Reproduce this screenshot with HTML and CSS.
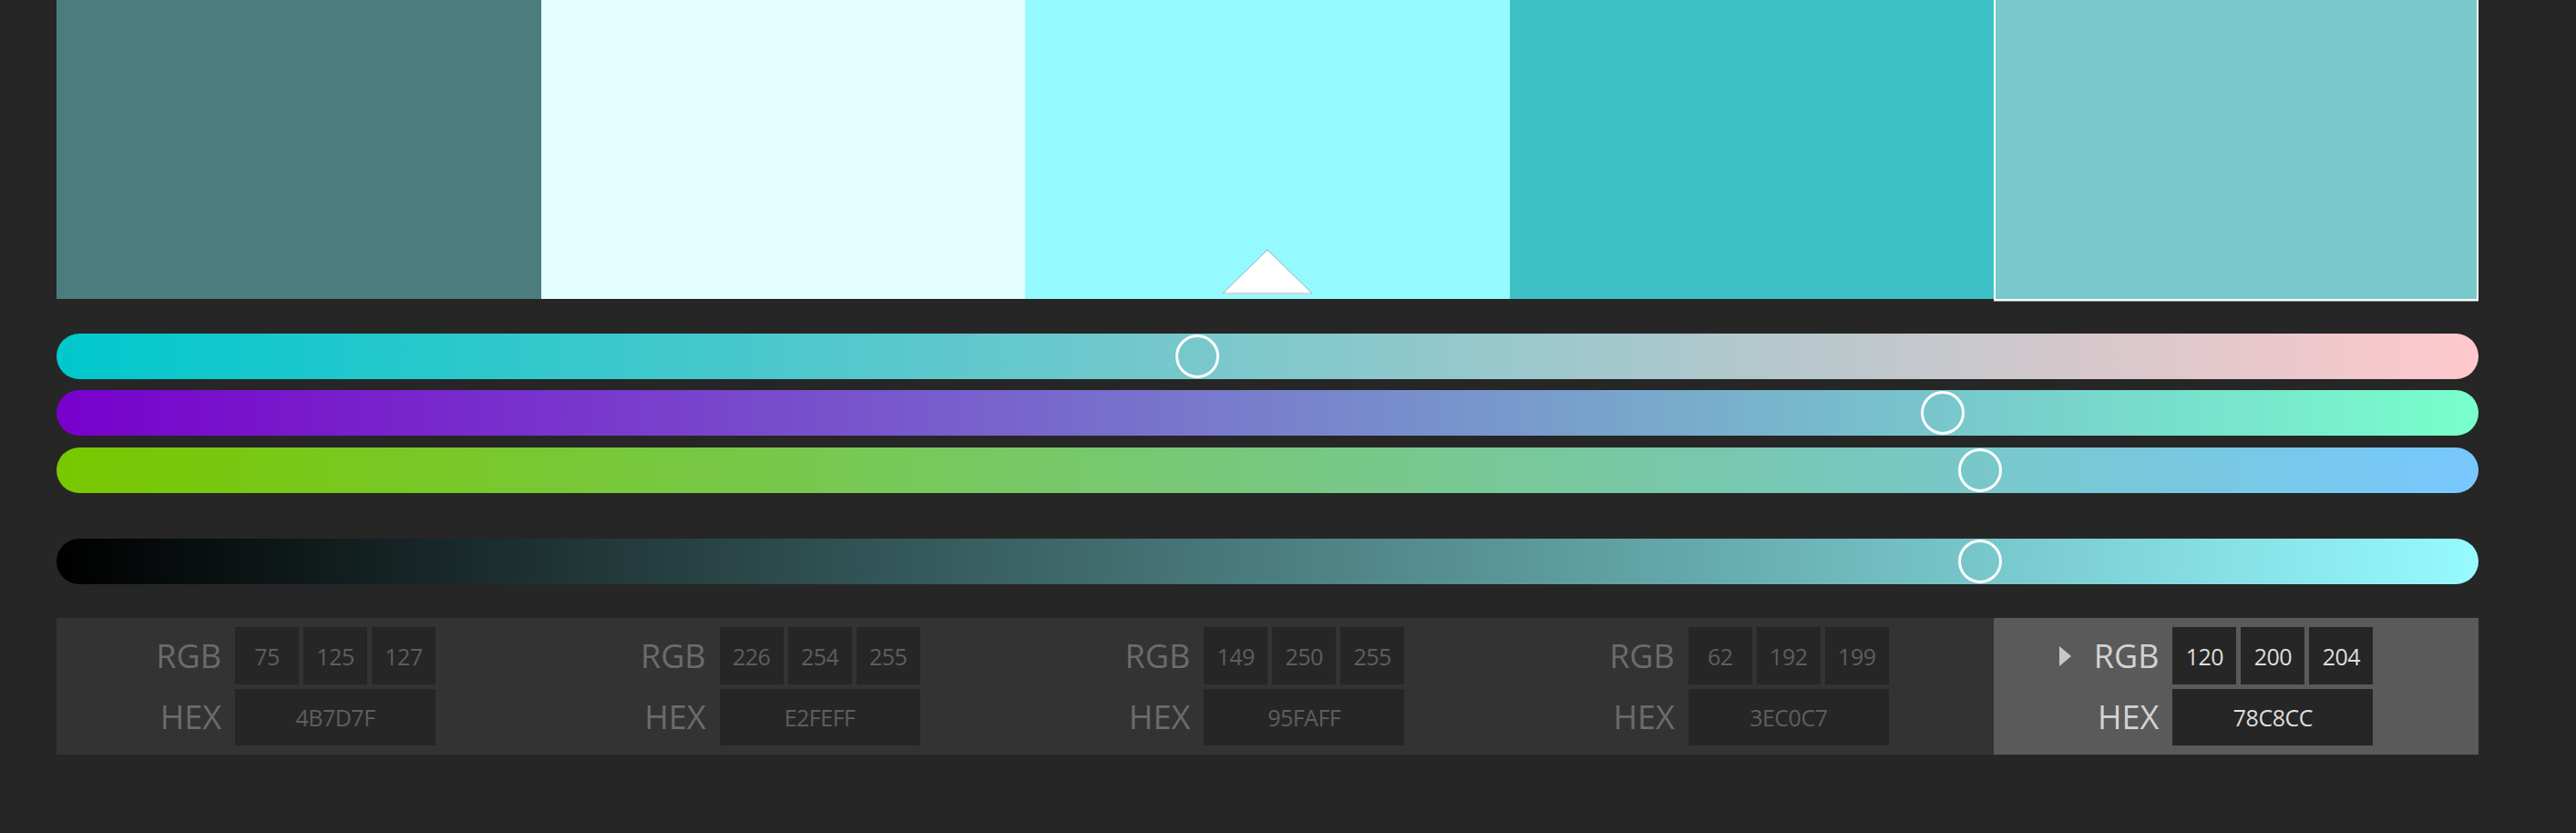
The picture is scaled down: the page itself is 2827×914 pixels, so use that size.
FILE: index.html
```html
<!DOCTYPE html>
<html>
<head>
<meta charset="utf-8">
<title>Color Wheel</title>
<link rel="stylesheet" href="styles.css">
</head>
<body>
<div class="app">
  <div class="swatches">
    <div class="swatch s1"></div>
    <div class="swatch s2"></div>
    <div class="swatch s3">
      <svg class="base-marker" viewBox="0 0 100 50" width="100" height="50">
        <polygon points="1,49 50,1 99,49" fill="#ffffff" stroke="#8fb4b6" stroke-width="1"/>
        <line x1="1" y1="49.5" x2="99" y2="49.5" stroke="#d8d8d8" stroke-width="1"/>
      </svg>
    </div>
    <div class="swatch s4"></div>
    <div class="swatch s5 selected"></div>
  </div>

  <div class="sliders">
    <div class="slider sl-r"><span class="thumb" style="left: calc(1px + (100% - 50px) * 0.4706)"></span></div>
    <div class="slider sl-g"><span class="thumb" style="left: calc(1px + (100% - 50px) * 0.7843)"></span></div>
    <div class="slider sl-b"><span class="thumb" style="left: calc(1px + (100% - 50px) * 0.8)"></span></div>
    <div class="slider sl-v"><span class="thumb" style="left: calc(1px + (100% - 50px) * 0.8)"></span></div>
  </div>

  <div class="values">
    <div class="col">
      <div class="row"><div class="label">RGB</div><div class="boxes"><div class="box">75</div><div class="box">125</div><div class="box">127</div></div></div>
      <div class="row"><div class="label">HEX</div><div class="boxes"><div class="box wide">4B7D7F</div></div></div>
    </div>
    <div class="col">
      <div class="row"><div class="label">RGB</div><div class="boxes"><div class="box">226</div><div class="box">254</div><div class="box">255</div></div></div>
      <div class="row"><div class="label">HEX</div><div class="boxes"><div class="box wide">E2FEFF</div></div></div>
    </div>
    <div class="col">
      <div class="row"><div class="label">RGB</div><div class="boxes"><div class="box">149</div><div class="box">250</div><div class="box">255</div></div></div>
      <div class="row"><div class="label">HEX</div><div class="boxes"><div class="box wide">95FAFF</div></div></div>
    </div>
    <div class="col">
      <div class="row"><div class="label">RGB</div><div class="boxes"><div class="box">62</div><div class="box">192</div><div class="box">199</div></div></div>
      <div class="row"><div class="label">HEX</div><div class="boxes"><div class="box wide">3EC0C7</div></div></div>
    </div>
    <div class="col active">
      <div class="row"><div class="label"><span class="caret"></span>RGB</div><div class="boxes"><div class="box">120</div><div class="box">200</div><div class="box">204</div></div></div>
      <div class="row"><div class="label">HEX</div><div class="boxes"><div class="box wide">78C8CC</div></div></div>
    </div>
  </div>
</div>
</body>
</html>
```

FILE: styles.css
```css
* { box-sizing: border-box; }

html, body {
  margin: 0;
  padding: 0;
  background: #262626;
  overflow: hidden;
}

body {
  width: 2827px;
  height: 914px;
  font-family: "Open Sans", "Noto Sans", "Liberation Sans", sans-serif;
}

.app {
  width: 2658px;
  margin-left: 62px;
}

/* swatches */
.swatches {
  display: grid;
  grid-template-columns: repeat(5, 1fr);
  align-items: start;
  height: 328px;
}

.swatch {
  height: 328px;
  position: relative;
}

.s1 { background: #4b7d7f; }
.s2 { background: #e2feff; }
.s3 { background: #95faff; }
.s4 { background: #3ec0c7; }
.s5 { background: #78c8cc; }

.swatch.selected {
  margin-top: -2px;
  height: 332px;
  border: 2px solid #ffffff;
  box-shadow: 0 1px 0 #8a8a8a;
}

.base-marker {
  position: absolute;
  left: 50%;
  bottom: 5px;
  transform: translateX(-50%);
  display: block;
}

/* sliders */
.sliders {
  margin-top: 38px;
  display: flex;
  flex-direction: column;
}

.slider {
  position: relative;
  height: 50px;
  border-radius: 25px;
}

.sl-r { background: linear-gradient(to right, #00c8cc, #ffc8cc); }
.sl-g { margin-top: 12px; background: linear-gradient(to right, #7800cc, #78ffcc); }
.sl-b { margin-top: 13px; background: linear-gradient(to right, #78c800, #78c8ff); }
.sl-v { margin-top: 50px; background: linear-gradient(to right, #000000, #96faff); }

.thumb {
  position: absolute;
  top: 1px;
  width: 48px;
  height: 48px;
  border: 3px solid #ffffff;
  border-radius: 50%;
}

/* values panel */
.values {
  margin-top: 37px;
  height: 150px;
  background: #333333;
  display: grid;
  grid-template-columns: repeat(5, 1fr);
}

.col {
  padding-top: 10px;
  display: flex;
  flex-direction: column;
  gap: 5px;
}

.col.active { background: #5a5a5a; }

.row {
  display: flex;
  align-items: center;
}

.label {
  width: 181px;
  margin-right: 15px;
  display: flex;
  align-items: center;
  justify-content: flex-end;
  font-size: 36px;
  line-height: 1;
  color: #6b6b6b;
}

.active .label { color: #d2d2d2; }

.caret {
  width: 0;
  height: 0;
  border-top: 11px solid transparent;
  border-bottom: 11px solid transparent;
  border-left: 13px solid #c8c8c8;
  margin-right: 25px;
}

.boxes {
  display: flex;
  gap: 5px;
}

.box {
  width: 70px;
  height: 63px;
  background: #262626;
  display: flex;
  align-items: center;
  justify-content: center;
  font-size: 25px;
  letter-spacing: -0.5px;
  color: #5e5e5e;
}

.box.wide {
  width: 220px;
  height: 62px;
}

.active .box { color: #dedede; }
```
